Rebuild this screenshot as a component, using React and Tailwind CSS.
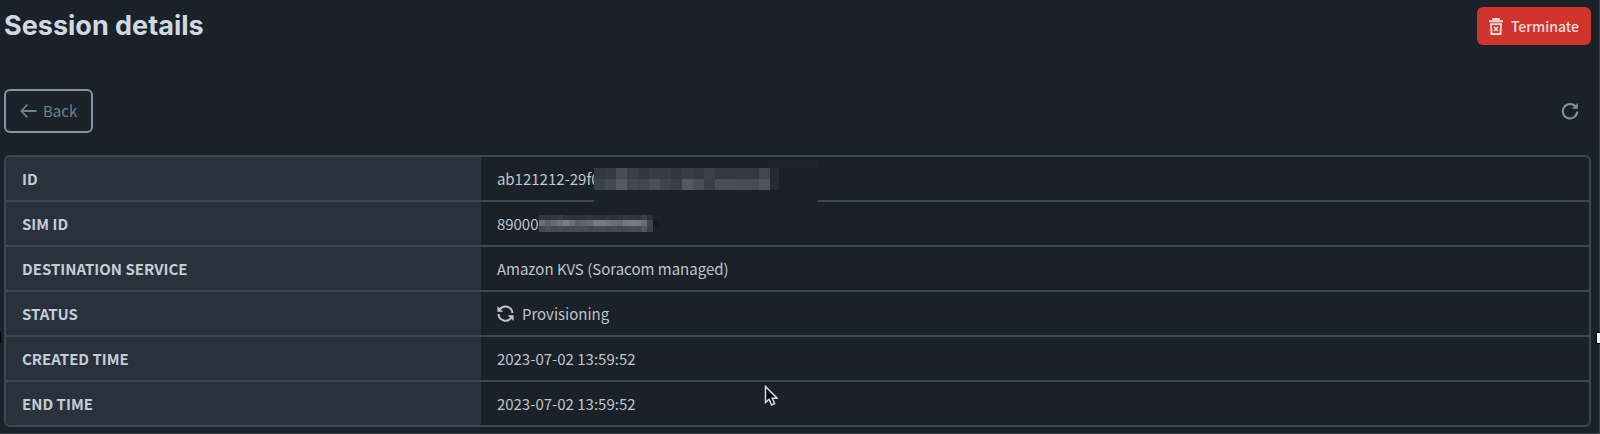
import React from 'react'

const ID_TOP = ['#33383f', '#363b42', '#484d53', '#3a3e45', '#33383f', '#383d43', '#373c42', '#32363d', '#3a3e44', '#343940', '#3c4147', '#34383f', '#343940', '#353a41', '#33373e', '#42454d']
const ID_BOTTOM = ['#3c4147', '#44494f', '#555b61', '#45494f', '#41464b', '#4c5156', '#40444a', '#393e44', '#555a60', '#4a4f55', '#3a3e45', '#4a4e55', '#4a4e55', '#474b52', '#474c52', '#50535b']
const SIM_TOP = ['#30373d', '#2e343b', '#31373d', '#363c42', '#2d333a', '#2b3138', '#2c3239', '#2c3239', '#31373d', '#2c3239', '#2a3037', '#30363c', '#2c3239', '#2e343a', '#32383e', '#30363c', '#2e343a', '#3c4248', '#2c3239']
const SIM_MIDDLE = ['#6a6f72', '#5d6266', '#666b6f', '#6e7377', '#7a7f82', '#6a6f73', '#5c6165', '#5f6468', '#63686b', '#757a7c', '#777c7e', '#707578', '#6a6f72', '#666b6f', '#757a7c', '#797e80', '#777c7e', '#686d70', '#41474c']
const SIM_BOTTOM = ['#43494e', '#4a5055', '#454b50', '#474d52', '#42484d', '#454b50', '#474d52', '#454b50', '#42484d', '#464c51', '#474d52', '#42484d', '#454b50', '#42484d', '#454b50', '#474d52', '#454b50', '#555a5f', '#3c4247']

const Mosaic = ({ rows, cell, heights, className, children }) => {
  const width = cell * rows[0].length
  let top = 0
  const strips = rows.map((colors, i) => {
    const y = top
    top += heights[i]
    return colors.map((fill, j) => (
      <rect key={`${i}-${j}`} x={j * cell} y={y} width={cell} height={heights[i]} fill={fill} />
    ))
  })
  return (
    <svg width={width} height={top} className={className} shapeRendering="crispEdges" overflow="visible" aria-hidden="true">
      {children}
      {strips}
    </svg>
  )
}

const ArrowLeftIcon = () => (
  <svg width="17" height="16" viewBox="0 0 17 16" fill="none" stroke="currentColor" strokeWidth="1.8" aria-hidden="true">
    <path d="M7.5 1.5 1.3 8l6.2 6.5M1.3 8h15.2" />
  </svg>
)

const TrashIcon = () => (
  <svg width="14" height="17" viewBox="0 0 14 17" fill="none" stroke="currentColor" aria-hidden="true">
    <path d="M0 3.3h14" strokeWidth="2" />
    <path d="M4.2 2.8V1h5.6v1.8" strokeWidth="1.8" />
    <path d="M2 6.2h10l-.5 9.8H2.5z" strokeWidth="1.8" />
    <path d="m5 8.8 4 4M9 8.8l-4 4" strokeWidth="1.7" />
  </svg>
)

const RefreshIcon = () => (
  <svg width="18" height="18" viewBox="0 0 18 18" fill="none" stroke="currentColor" strokeWidth="2" aria-hidden="true">
    <path d="M14.8 5A7.2 7.2 0 1 0 16.2 9.6" />
    <path d="M16.8 1v5.8H11z" fill="currentColor" stroke="none" />
  </svg>
)

const SyncIcon = () => (
  <svg width="17" height="17" viewBox="0 0 17 17" fill="none" stroke="currentColor" strokeWidth="2" aria-hidden="true">
    <path d="M2.6 4.6A7 7 0 0 1 15.4 8" />
    <path d="M1.5 9A7 7 0 0 0 14.4 12.4" />
    <path d="M.4 1v5.8h5.8zM16.6 16v-5.8h-5.8z" fill="currentColor" stroke="none" />
  </svg>
)

const Row = ({ label, children }) => (
  <tr className="group">
    <th
      scope="row"
      className="h-[45px] w-[30%] border-b-2 border-[#3b4853] bg-[#29313a] px-4 text-left font-bold text-[#c3cdd8] group-last:h-[43px] group-last:border-b-0"
    >
      {label}
    </th>
    <td className="border-b-2 border-[#3b4853] px-4 text-[#bfc5ca] group-last:border-b-0">
      <div className="flex items-center">{children}</div>
    </td>
  </tr>
)

const App = () => {
  return (
    <main className="relative border-r border-b border-[#39434a] bg-[#1b2129] pt-[7px] pr-2 pb-[6px] pl-1 font-['Noto_Sans_CJK_JP',sans-serif] text-[15px] leading-5">
      <header className="flex items-center justify-between">
        <h1 className="font-['Inter',sans-serif] text-[27px] leading-[38px] font-bold text-[#d0d9e1]">Session details</h1>
        <button type="button" className="flex h-[38px] items-center gap-2 rounded-md bg-[#d0342c] px-3 text-[14px] font-medium text-[#f8dcda]">
          <TrashIcon />
          Terminate
        </button>
      </header>

      <div className="mt-11 flex items-center justify-between">
        <button type="button" className="flex h-11 items-center gap-[6px] rounded-md border-2 border-[#8294a6] px-[14px] text-[#728090]">
          <ArrowLeftIcon />
          Back
        </button>
        <button type="button" aria-label="Refresh" className="mr-3 text-[#8292a2]">
          <RefreshIcon />
        </button>
      </div>

      <div className="mt-[22px] overflow-hidden rounded-md border-2 border-[#3b4853]">
        <table className="w-full border-separate border-spacing-0">
          <tbody>
            <Row label="ID">
              ab121212-29f
              <span className="relative">
                0
                <Mosaic rows={[ID_TOP, ID_BOTTOM]} cell={11} heights={[11, 11]} className="absolute -top-px left-[3px]">
                  <rect x="0" y="-8" width="224" height="43" fill="#1b2129" />
                  <rect x="174" y="-8" width="50" height="8" fill="#1d242a" />
                  <rect x="174" y="0" width="11" height="22" fill="#252a32" />
                  <rect x="185" y="0" width="11" height="22" fill="#1b1f28" />
                </Mosaic>
              </span>
            </Row>
            <Row label="SIM ID">
              89000
              <Mosaic rows={[SIM_TOP, SIM_MIDDLE, SIM_BOTTOM]} cell={6} heights={[5, 6, 6]}>
                <rect x="114" y="5" width="6" height="6" fill="#161a22" />
              </Mosaic>
            </Row>
            <Row label="DESTINATION SERVICE">Amazon KVS (Soracom managed)</Row>
            <Row label="STATUS">
              <span className="mr-2">
                <SyncIcon />
              </span>
              Provisioning
            </Row>
            <Row label="CREATED TIME">2023-07-02 13:59:52</Row>
            <Row label="END TIME">2023-07-02 13:59:52</Row>
          </tbody>
        </table>
      </div>

      <svg width="14" height="21" viewBox="0 0 14 21" className="absolute top-[385px] left-[764px]" aria-hidden="true">
        <path d="M1.5 1.5v16l3.6-3.2 2.5 5.6 3-1.3-2.4-5.4h4.9z" fill="#0a0a0c" stroke="#dcdcdc" strokeWidth="1.5" />
      </svg>
      <span className="absolute top-[332px] left-0 h-[11px] w-px bg-black" />
      <span className="absolute top-[332px] right-[-1px] h-3 w-1 border border-r-0 border-black bg-white" />
    </main>
  )
}

export default App
